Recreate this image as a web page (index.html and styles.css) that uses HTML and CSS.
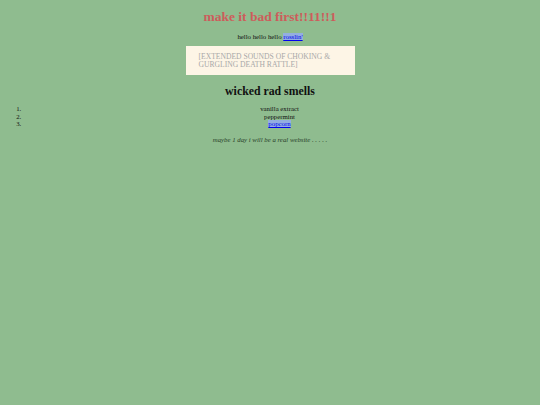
FILE: index.html
```html
<!DOCTYPE html>
<html>
<head>
<meta charset="utf-8">
<link rel="stylesheet" href="styles.css">
</head>
<body class="page">
  <h1 class="title">make it bad first!!11!!1</h1>
  <p class="hello">hello hello hello <a class="lnk" href="#">rosslin'</a></p>
  <div class="quote">[EXTENDED SOUNDS OF CHOKING &amp; GURGLING DEATH RATTLE]</div>
  <h2 class="sub">wicked rad smells</h2>
  <ol class="smells">
    <li>vanilla extract</li>
    <li>peppermint</li>
    <li><a class="lnk" href="#">popcorn</a></li>
  </ol>
  <p class="maybe">maybe 1 day i will be a real website . . . . .</p>
</body>
</html>
```
FILE: styles.css
```css
html { background: #8fbc8f; }
.page {
  margin: 4px;
  font-family: "Liberation Serif", "Times New Roman", serif;
  font-size: 6.8px;
  color: #111;
  text-align: center;
}
.title {
  font-size: 13.5px;
  color: #cd5c5c;
  margin: 5px 0 7px;
  line-height: 16px;
}
.hello {
  margin: 0 0 5px;
  line-height: 9px;
}
.lnk {
  color: #0000ee;
  background: #93aee0;
}
.quote {
  width: 156px;
  margin: 0 auto;
  padding: 7px 0 6px 13px;
  background: #fdf5e6;
  color: #a8a8a8;
  text-align: left;
  line-height: 8px;
  font-size: 7.6px;
}
.sub {
  font-size: 11.8px;
  margin: 9px 0 7px;
  line-height: 14px;
}
.smells {
  margin: 0;
  padding-left: 19px;
  line-height: 7.6px;
}
.maybe {
  font-style: italic;
  color: #2a3f2a;
  margin: 8px 0;
  font-size: 6.8px;
}
```
